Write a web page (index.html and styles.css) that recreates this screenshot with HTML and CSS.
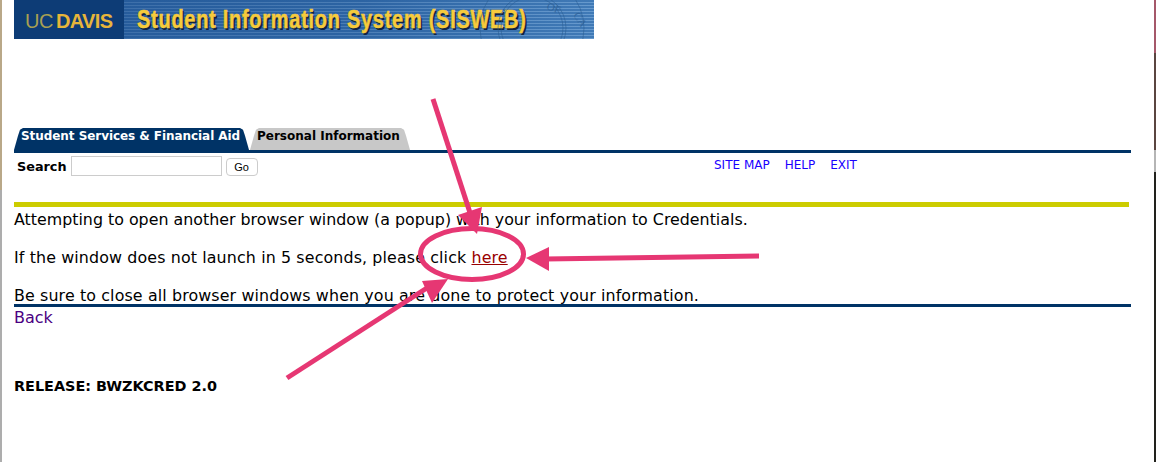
FILE: index.html
```html
<!doctype html>
<html>
  <head>
    <meta charset="utf-8">
    <title>Student Information System (SISWEB)</title>
    <link rel="stylesheet" href="styles.css">
  </head>
  <body>
    <div class="edge-left"></div>
    <div class="edge-right"></div>

    <div class="page">
      <div class="banner">
        <div class="logo"><span class="uc">UC</span><b>DAVIS</b></div>
        <div class="sis">Student Information System (SISWEB)</div>
        <svg class="seal" width="120" height="39" viewBox="0 0 120 39">
          <g fill="none" stroke="#2a5c92" stroke-opacity=".55">
            <circle cx="58" cy="28" r="52"/>
            <circle cx="58" cy="28" r="34"/>
            <circle cx="58" cy="28" r="31"/>
          </g>
          <text x="72" y="9" class="seal-text" transform="rotate(20 72 9)">OF</text>
          <text x="99" y="15" class="seal-text" transform="rotate(58 99 15)">CA</text>
        </svg>
      </div>

      <div class="tabs">
        <span class="tab on">Student Services &amp; Financial Aid</span>
        <span class="tab">Personal Information</span>
      </div>

      <div class="navbar">
        <form class="search">
          <b>Search</b>
          <input type="text" class="q">
          <button type="button" class="go">Go</button>
        </form>
        <div class="links">
          <a href="#">SITE MAP</a>
          <a href="#">HELP</a>
          <a href="#">EXIT</a>
        </div>
      </div>

      <div class="rule-y"></div>

      <p>Attempting to open another browser window (a popup) with your information to Credentials.</p>
      <p class="wide">If the window does not launch in 5 seconds, please click <a class="here" href="#">here</a></p>
      <p class="wide">Be sure to close all browser windows when you are done to protect your information.</p>

      <div class="rule-b"></div>
      <a class="back" href="#">Back</a>
      <div class="release">RELEASE: BWZKCRED 2.0</div>
    </div>

    <!-- annotation drawn on top of the screenshot -->
    <svg class="marks" width="1156" height="462" viewBox="0 0 1156 462">
      <g fill="none" stroke="#e63773" stroke-width="5">
        <path d="M433 99 L473 222"/>
        <path d="M759 256 L545 259"/>
        <path d="M287 378 L430 286"/>
        <ellipse cx="472" cy="254" rx="51.5" ry="25.5"/>
      </g>
      <g fill="#e63773">
        <path d="M458 215 L482 207 L477 234 Z"/>
        <path d="M526 258 L549 247 L549 271 Z"/>
        <path d="M448 279 L422 281 L432 303 Z"/>
      </g>
    </svg>
  </body>
</html>
```

FILE: styles.css
```css
* {
  box-sizing: border-box;
}
html, body {
  margin: 0;
  height: 100%;
  overflow: hidden;
  background: #fff;
}
body {
  font-family: "DejaVu Sans", Verdana, sans-serif;
  color: #000;
}
.edge-left {
  position: absolute;
  left: 0;
  top: 0;
  bottom: 0;
  width: 2px;
  background: linear-gradient(#b9a888 0, #b9a888 190px, #adadad 190px);
}
.edge-right {
  position: absolute;
  right: 0;
  top: 0;
  bottom: 0;
  width: 2px;
  background: linear-gradient(#a5586a 0, #a5586a 53px, #5a4540 53px, #5a4540 150px, #b5b5b5 150px, #b5b5b5 172px, #22221d 172px);
}
.page {
  padding-left: 14px;
  width: 1131px;
}
.banner {
  position: relative;
  display: flex;
  align-items: center;
  width: 580px;
  height: 39px;
  background:
    linear-gradient(90deg, rgba(20, 70, 135, .6), rgba(20, 70, 135, .35) 60%, rgba(90, 145, 200, .2)),
    repeating-linear-gradient(#3a74b2 0, #3a74b2 2px, #6a9ccf 2px, #6a9ccf 3px);
}
.logo {
  flex: none;
  width: 110px;
  height: 100%;
  background: #0d3c76;
  color: #a8a052;
  font: 20px "Liberation Sans", Arial, sans-serif;
  padding: 10px 0 0 11px;
  letter-spacing: -.5px;
}
.logo b {
  margin-left: 3px;
  color: #e7b53a;
  letter-spacing: -.6px;
}
.sis {
  flex: none;
  margin: 0 0 1px 13px;
  color: #f6cb3c;
  font: bold 25px "Liberation Sans", Arial, sans-serif;
  letter-spacing: .9px;
  -webkit-text-stroke: .5px #f6cb3c;
  text-shadow: 2px 2px 0 #10243f;
  white-space: nowrap;
  transform: scaleX(.8);
  transform-origin: left center;
}
.seal {
  position: absolute;
  right: 0;
  top: 0;
}
.seal-text {
  fill: #2a5c92;
  fill-opacity: .7;
  font: 11px "Liberation Serif", serif;
}
.tabs {
  display: flex;
  gap: 1px;
  margin-top: 89px;
  height: 22px;
}
.tab {
  width: 160px;
  padding-left: 7px;
  line-height: 16px;
  font-size: 12px;
  font-weight: bold;
  background: #c8c8c8;
  clip-path: polygon(0 100%, 4px 35%, 6px 8%, 9px 0, calc(100% - 9px) 0, calc(100% - 6px) 8%, calc(100% - 4px) 35%, 100% 100%);
}
.tab.on {
  width: 235px;
  background: #003366;
  color: #fff;
  letter-spacing: -.06px;
}
.navbar {
  display: flex;
  height: 52px;
  border-top: 3px solid #003366;
}
.search {
  display: flex;
  align-items: flex-start;
  gap: 4px;
  margin: 0;
  padding: 3px 0 0 3px;
  width: 700px;
  font-size: 12.8px;
  line-height: 21px;
}
.q {
  width: 151px;
  height: 20px;
  border: 1px solid #ccc;
  margin: 0;
}
.go {
  width: 32px;
  height: 18px;
  margin: 2px 0 0;
  padding: 0;
  background: #fff;
  border: 1px solid #ccc;
  border-radius: 4px;
  font: 11px "Liberation Sans", Arial, sans-serif;
}
.links {
  display: flex;
  gap: 15px;
  padding-top: 5px;
  font-size: 12px;
}
.links a {
  color: #1a00ff;
  text-decoration: none;
}
.rule-y {
  width: 1115px;
  height: 5px;
  background: #cccc00;
}
p {
  margin: 0 0 22px;
  font-size: 15.85px;
  line-height: 16px;
}
p:first-of-type {
  margin-top: 5px;
}
p.wide {
  letter-spacing: .13px;
}
.here {
  color: #990000;
}
.rule-b {
  height: 3px;
  margin-top: -22px;
  background: #003366;
}
.back {
  display: block;
  margin-top: 2px;
  color: #4b0082;
  font-size: 16px;
  line-height: 18px;
  text-decoration: none;
}
.release {
  margin-top: 51px;
  font-size: 14.4px;
  font-weight: bold;
}
.marks {
  position: absolute;
  left: 0;
  top: 0;
}
```
